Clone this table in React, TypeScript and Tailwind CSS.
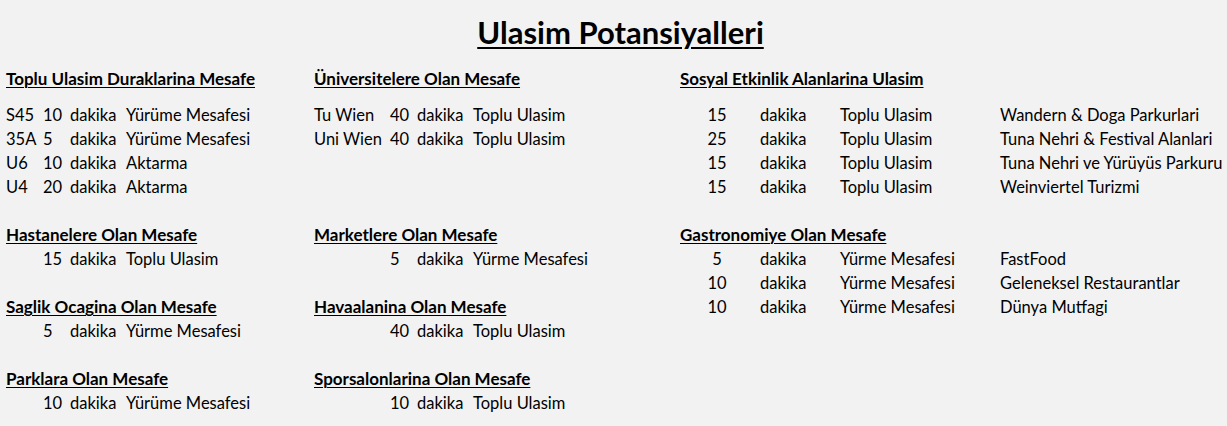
const font = { fontFamily: "Lato, 'Noto Sans', sans-serif" };

type Cell = string;

// column widths for each block, px
const leftCols = ["w-[37px]", "w-[27px]", "w-[56px]", "w-[188px]"];
const midCols = ["w-[76px]", "w-[27px]", "w-[56px]", "w-[207px]"];
const rightCols = ["w-[74px] text-center", "w-[86px] pl-[6px]", "w-[160px]", "w-[227px]"];

type Item = { kind: "head"; text: string } | { kind: "row"; cells: Cell[] } | { kind: "gap" };

const leftBlock: Item[] = [
  { kind: "head", text: "Toplu Ulasim Duraklarina Mesafe" },
  { kind: "row", cells: ["S45", "10", "dakika", "Yürüme Mesafesi"] },
  { kind: "row", cells: ["35A", "5", "dakika", "Yürüme Mesafesi"] },
  { kind: "row", cells: ["U6", "10", "dakika", "Aktarma"] },
  { kind: "row", cells: ["U4", "20", "dakika", "Aktarma"] },
  { kind: "gap" },
  { kind: "head", text: "Hastanelere Olan Mesafe" },
  { kind: "row", cells: ["", "15", "dakika", "Toplu Ulasim"] },
  { kind: "gap" },
  { kind: "head", text: "Saglik Ocagina Olan Mesafe" },
  { kind: "row", cells: ["", "5", "dakika", "Yürme Mesafesi"] },
  { kind: "gap" },
  { kind: "head", text: "Parklara Olan Mesafe" },
  { kind: "row", cells: ["", "10", "dakika", "Yürüme Mesafesi"] },
];

const midBlock: Item[] = [
  { kind: "head", text: "Üniversitelere Olan Mesafe" },
  { kind: "row", cells: ["Tu Wien", "40", "dakika", "Toplu Ulasim"] },
  { kind: "row", cells: ["Uni Wien", "40", "dakika", "Toplu Ulasim"] },
  { kind: "gap" },
  { kind: "gap" },
  { kind: "gap" },
  { kind: "head", text: "Marketlere Olan Mesafe" },
  { kind: "row", cells: ["", "5", "dakika", "Yürme Mesafesi"] },
  { kind: "gap" },
  { kind: "head", text: "Havaalanina Olan Mesafe" },
  { kind: "row", cells: ["", "40", "dakika", "Toplu Ulasim"] },
  { kind: "gap" },
  { kind: "head", text: "Sporsalonlarina Olan Mesafe" },
  { kind: "row", cells: ["", "10", "dakika", "Toplu Ulasim"] },
];

const rightBlock: Item[] = [
  { kind: "head", text: "Sosyal Etkinlik Alanlarina Ulasim" },
  { kind: "row", cells: ["15", "dakika", "Toplu Ulasim", "Wandern & Doga Parkurlari"] },
  { kind: "row", cells: ["25", "dakika", "Toplu Ulasim", "Tuna Nehri & Festival Alanlari"] },
  { kind: "row", cells: ["15", "dakika", "Toplu Ulasim", "Tuna Nehri ve Yürüyüs Parkuru"] },
  { kind: "row", cells: ["15", "dakika", "Toplu Ulasim", "Weinviertel Turizmi"] },
  { kind: "gap" },
  { kind: "head", text: "Gastronomiye Olan Mesafe" },
  { kind: "row", cells: ["5", "dakika", "Yürme Mesafesi", "FastFood"] },
  { kind: "row", cells: ["10", "dakika", "Yürme Mesafesi", "Geleneksel Restaurantlar"] },
  { kind: "row", cells: ["10", "dakika", "Yürme Mesafesi", "Dünya Mutfagi"] },
];

function Block({ items, cols, className }: { items: Item[]; cols: string[]; className?: string }) {
  return (
    <div className={"flex flex-col " + (className || "")}>
      {items.map((it, i) => {
        if (it.kind === "head") {
          return (
            <div
              key={i}
              className={
                "h-[24px] leading-[24px] text-[17px] font-bold whitespace-nowrap underline decoration-1 underline-offset-[2px]" +
                (i === 0 ? " mb-[12px]" : "")
              }
            >
              {it.text}
            </div>
          );
        }
        if (it.kind === "gap") return <div key={i} className="h-[24px]" />;
        return (
          <div key={i} className="flex h-[24px] leading-[24px] whitespace-nowrap">
            {it.cells.map((c, j) => (
              <div key={j} className={"shrink-0 " + cols[j]}>
                {c}
              </div>
            ))}
          </div>
        );
      })}
    </div>
  );
}

export default function App() {
  return (
    <div className="w-[1227px] h-[426px] bg-[#f2f2f2] text-black text-[16.5px] overflow-hidden" style={font}>
      <div className="pl-[14px] pt-[14px] h-[67px] flex justify-center">
        <h1 className="text-[31px] leading-[36px] font-bold underline decoration-2 underline-offset-[3px]">
          Ulasim Potansiyalleri
        </h1>
      </div>
      <div className="flex">
        <Block items={leftBlock} cols={leftCols} className="w-[314px] pl-[6px]" />
        <Block items={midBlock} cols={midCols} className="w-[366px]" />
        <Block items={rightBlock} cols={rightCols} className="flex-1" />
      </div>
    </div>
  );
}
